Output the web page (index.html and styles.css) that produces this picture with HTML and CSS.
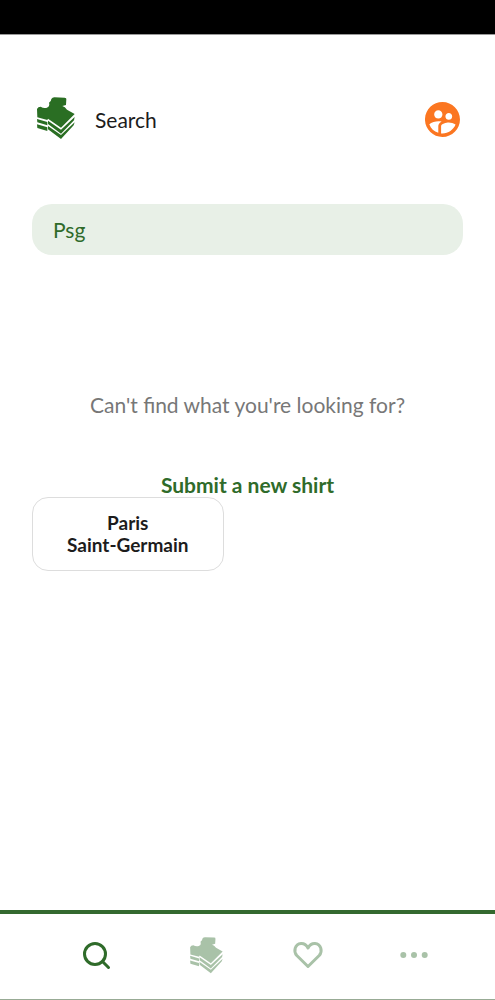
FILE: index.html
```html
<!DOCTYPE html>
<html lang="en">
<head>
<meta charset="utf-8">
<meta name="viewport" content="width=device-width, initial-scale=1">
<title>Search</title>
<link rel="stylesheet" href="styles.css">
</head>
<body>
<svg class="defs" aria-hidden="true">
  <symbol id="shirts" viewBox="33 33 120 132">
    <path d="M36 72Q39 65 47 65Q56 71 66 68Q74 65 73 58L72 53Q79 48 79 42Q82 37 88 37L119 38Q125 38 124 43L123 60L112 63Q120 65 126 74L149 87L108 128L69 101L67 105L37 97Z"/>
    <path d="M36 102L67 111V121L37 112ZM36 118L67 127V138L37 129Z"/>
    <path d="M69 107L108 134L149 96L147 106L108 146L69 117ZM69 123L108 150L149 112L146 121L108 162L69 133Z"/>
  </symbol>
</svg>
<div class="app">
  <div class="status-bar"></div>
  <header class="header">
    <svg class="logo" aria-hidden="true"><use href="#shirts"/></svg>
    <h1 class="title">Search</h1>
    <button class="profile" type="button" aria-label="Community">
      <svg class="profile-icon" viewBox="2 2 20 20" aria-hidden="true"><path d="M11.99 2c-5.52 0-10 4.48-10 10s4.48 10 10 10 10-4.48 10-10-4.48-10-10-10zm3.61 6.34c1.07 0 1.93.86 1.93 1.93 0 1.07-.86 1.93-1.93 1.93-1.07 0-1.93-.86-1.93-1.93-.01-1.07.86-1.93 1.93-1.93zm-6-1.58c1.3 0 2.36 1.06 2.36 2.36 0 1.3-1.06 2.36-2.36 2.36s-2.36-1.06-2.36-2.36c0-1.31 1.05-2.36 2.36-2.36zm0 9.13v3.75c-2.4-.75-4.3-2.6-5.14-4.96 1.05-1.12 3.67-1.69 5.14-1.69.53 0 1.2.08 1.9.22-1.64.87-1.9 2.02-1.9 2.68zM11.99 20c-.27 0-.53-.01-.79-.04v-4.07c0-1.42 2.94-2.13 4.4-2.13 1.07 0 2.92.39 3.84 1.15-1.17 2.97-4.06 5.09-7.45 5.09z"/></svg>
    </button>
  </header>
  <main class="content">
    <input class="search" type="text" value="Psg" aria-label="Search shirts">
    <p class="hint">Can't find what you're looking for?</p>
    <a class="submit" href="#">Submit a new shirt</a>
    <div class="results">
      <button class="club" type="button">Paris<br>Saint-Germain</button>
    </div>
  </main>
  <nav class="tabs" aria-label="Main">
    <a class="tab tab-active" href="#" aria-label="Search">
      <svg class="tab-icon" viewBox="0 0 32 32" aria-hidden="true"><circle class="line" cx="15" cy="15" r="10.5"/><path class="line" d="M22.500 22.500L28.500 28.500"/></svg>
    </a>
    <a class="tab" href="#" aria-label="Shirts">
      <svg class="tab-logo" viewBox="5 33 148 132" aria-hidden="true"><use href="#shirts" x="33" y="33" width="120" height="132"/></svg>
    </a>
    <a class="tab" href="#" aria-label="Favourites">
      <svg class="tab-icon" viewBox="0 0 32 32" aria-hidden="true"><path class="line" d="M16 27.500L4.800 16.500C1.200 12.500 2.800 5 9 4.500C12.500 4.300 14.700 6.500 16 9C17.300 6.500 19.500 4.300 23 4.500C29.200 5 30.800 12.500 27.200 16.500Z"/></svg>
    </a>
    <a class="tab" href="#" aria-label="More">
      <svg class="tab-icon" viewBox="0 0 32 32" aria-hidden="true"><circle cx="5.300" cy="16" r="3"/><circle cx="16" cy="16" r="3"/><circle cx="26.700" cy="16" r="3"/></svg>
    </a>
  </nav>
</div>
</body>
</html>
```

FILE: styles.css
```css
* {
  box-sizing: border-box;
}

body {
  margin: 0;
  background: #fff;
  color: #1c1c1c;
  font-family: Lato, "Liberation Sans", sans-serif;
}

.defs {
  display: block;
  width: 0;
  height: 0;
}

.app {
  display: flex;
  flex-direction: column;
  min-height: 100vh;
}

.status-bar {
  height: 35px;
  background: #000;
  border-bottom: 1px solid #999;
}

.header {
  display: flex;
  align-items: center;
  padding: 61px 35px 0 36px;
}

.logo {
  width: 40px;
  height: 44px;
  fill: #2a6e23;
}

.title {
  flex: 1;
  margin: 4px 0 0 19px;
  font-size: 21px;
  font-weight: 400;
  line-height: 26px;
}

.profile {
  margin-top: 2px;
  padding: 0;
  border: 0;
  background: none;
}

.profile-icon {
  display: block;
  width: 35px;
  height: 35px;
  fill: #fb7621;
}

.content {
  flex: 1;
  display: flex;
  flex-direction: column;
  padding: 64px 32px 0;
}

.search {
  width: 100%;
  height: 51px;
  padding: 0 21px;
  border: 0;
  border-radius: 20px;
  outline: 0;
  background: #e8f0e7;
  color: #2f6b2a;
  font: 400 21px/26px Lato, "Liberation Sans", sans-serif;
}

.hint {
  margin: 138px 0 0;
  color: #777;
  font-size: 21px;
  line-height: 24px;
  text-align: center;
}

.submit {
  align-self: center;
  margin-top: 56px;
  color: #2f6b2a;
  font-size: 21px;
  font-weight: 700;
  line-height: 24px;
  text-decoration: none;
}

.results {
  display: grid;
  grid-template-columns: 1fr 1fr;
  gap: 48px;
}

.club {
  padding: 14px 16px;
  border: 1px solid #ddd;
  border-radius: 16px;
  background: #fff;
  color: #1c1c1c;
  font: 700 19px/22px Lato, "Liberation Sans", sans-serif;
}

.tabs {
  display: grid;
  grid-template-columns: repeat(4, 1fr);
  align-items: center;
  height: 90px;
  padding: 0 28px 4px 43px;
  border-top: 4px solid #34692f;
  border-bottom: 1px solid #98ab95;
}

.tab {
  display: flex;
  justify-content: center;
  color: #a9c2a8;
}

.tab-active {
  color: #2f6b2a;
}

.tab-icon {
  width: 32px;
  height: 32px;
  fill: currentColor;
}

.tab-logo {
  width: 43px;
  height: 38px;
  fill: currentColor;
}

.line {
  fill: none;
  stroke: currentColor;
  stroke-width: 3;
  stroke-linecap: round;
  stroke-linejoin: round;
}
```
